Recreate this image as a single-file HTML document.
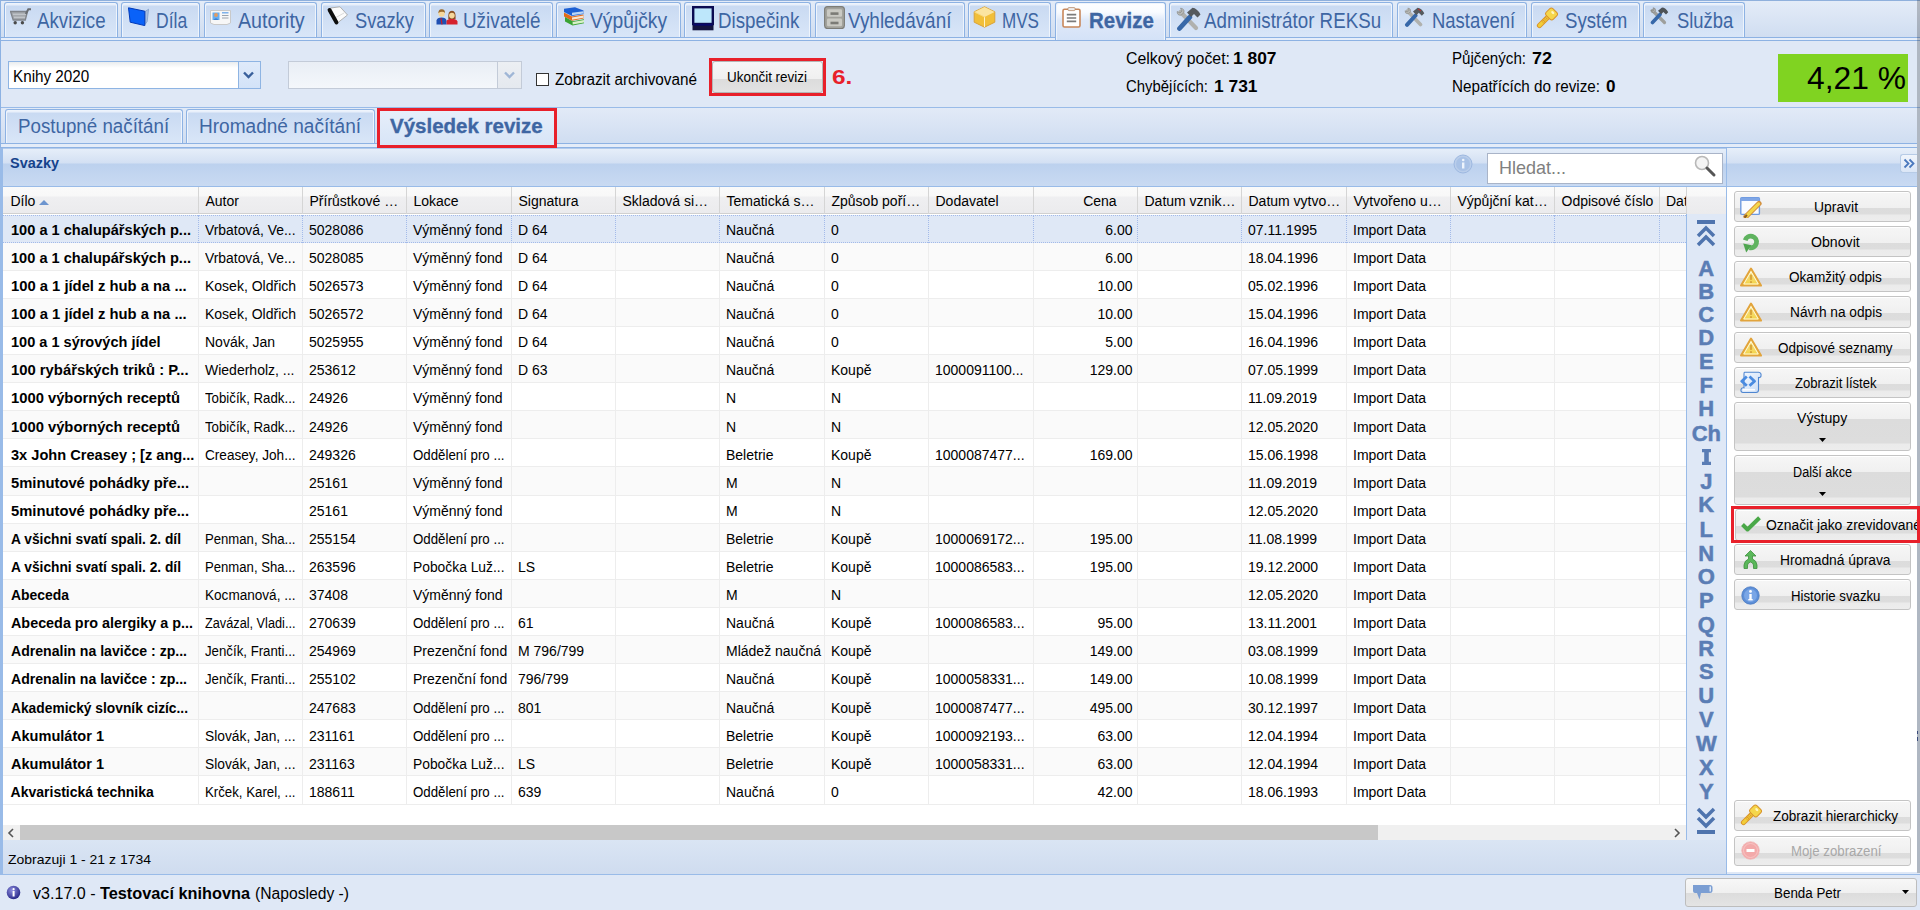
<!DOCTYPE html>
<html><head><meta charset="utf-8"><style>
html,body{margin:0;padding:0;}
body{width:1920px;height:910px;overflow:hidden;position:relative;background:#dfe8f6;font-family:"Liberation Sans",sans-serif;}
.t{position:absolute;white-space:nowrap;line-height:1;}
.ic{position:absolute;width:22px;height:20px;}

</style></head><body>
<div style="position:absolute;left:0px;top:0px;width:1920px;height:41px;background:linear-gradient(#e4ecf8,#cedcf0);"></div>
<div style="position:absolute;left:0px;top:0px;width:1920px;height:1px;background:#8fb0dc;"></div>
<div style="position:absolute;left:0px;top:37px;width:1920px;height:1px;background:#8db2e3;"></div>
<div style="position:absolute;left:0px;top:38px;width:1920px;height:2px;background:#e6eefa;"></div>
<div style="position:absolute;left:0px;top:40px;width:1920px;height:1px;background:#8db2e3;"></div>
<div style="position:absolute;left:4px;top:2px;width:114px;height:35px;box-sizing:border-box;border:1px solid #8db2e3;border-bottom:none;border-radius:3px 3px 0 0;background:linear-gradient(#e9f0fb 0,#e9f0fb 2px,#c9daf2 3px,#d9e6f8 100%);box-shadow:inset 1px 1px 0 #eef4fc,inset -1px 0 0 #eef4fc;"></div>
<div class="t" style="left:37.00px;top:10px;font-size:22px;color:#3e66a3; transform:scaleX(0.8502);transform-origin:0 0;">Akvizice</div>
<svg style="position:absolute;left:10px;top:8px" width="22" height="17" viewBox="0 0 22 17"><path d="M0.5 3.5 H17.5 L15.3 12 H3.2 Z" fill="#a4a8ad" stroke="#80848a" stroke-width="1.3"/><path d="M3 6.3 H16 M4 9.2 H15" stroke="#c9cdd2" stroke-width="1.1"/><path d="M15.8 6 L18.3 1.3 H21" stroke="#696d72" stroke-width="2" fill="none"/><circle cx="5.2" cy="14.8" r="1.7" fill="#4a4a4a"/><circle cx="12.4" cy="14.8" r="1.7" fill="#4a4a4a"/></svg>
<div style="position:absolute;left:121px;top:2px;width:79px;height:35px;box-sizing:border-box;border:1px solid #8db2e3;border-bottom:none;border-radius:3px 3px 0 0;background:linear-gradient(#e9f0fb 0,#e9f0fb 2px,#c9daf2 3px,#d9e6f8 100%);box-shadow:inset 1px 1px 0 #eef4fc,inset -1px 0 0 #eef4fc;"></div>
<div class="t" style="left:155.80px;top:10px;font-size:22px;color:#3e66a3; transform:scaleX(0.7975);transform-origin:0 0;">Díla</div>
<svg style="position:absolute;left:128px;top:7px" width="21" height="19"><path d="M17 4.5 L20.6 2.2 L19.2 14.5 L17 17.5Z" fill="#a9bfe0" stroke="#6f8fc0" stroke-width="0.6"/><path d="M0.5 0.8 L16.8 4.2 L16.8 18.6 L2.2 15.2 Z" fill="#0a62f8" stroke="#0039b8" stroke-width="1"/></svg>
<div style="position:absolute;left:204px;top:2px;width:113px;height:35px;box-sizing:border-box;border:1px solid #8db2e3;border-bottom:none;border-radius:3px 3px 0 0;background:linear-gradient(#e9f0fb 0,#e9f0fb 2px,#c9daf2 3px,#d9e6f8 100%);box-shadow:inset 1px 1px 0 #eef4fc,inset -1px 0 0 #eef4fc;"></div>
<div class="t" style="left:237.80px;top:10px;font-size:22px;color:#3e66a3; transform:scaleX(0.8943);transform-origin:0 0;">Autority</div>
<svg style="position:absolute;left:210px;top:10px" width="21" height="15"><path d="M0.5 0.5 H20.5 V13 L17 14.5 L4 14.5 L0.5 13Z" fill="#f7f7f7" stroke="#c9c9c9"/><rect x="2.5" y="2.5" width="7" height="7.5" fill="#67aef0"/><circle cx="6" cy="5" r="1.9" fill="#e59b5e"/><path d="M3.5 10 Q6 6.5 8.5 10Z" fill="#3d7fd0"/><path d="M12 2.8 H18.5" stroke="#6aa6e8" stroke-width="1.3"/><path d="M12 5.5 H18.5 M12 8 H18.5" stroke="#9ba3ad" stroke-width="1.2"/></svg>
<div style="position:absolute;left:321px;top:2px;width:105px;height:35px;box-sizing:border-box;border:1px solid #8db2e3;border-bottom:none;border-radius:3px 3px 0 0;background:linear-gradient(#e9f0fb 0,#e9f0fb 2px,#c9daf2 3px,#d9e6f8 100%);box-shadow:inset 1px 1px 0 #eef4fc,inset -1px 0 0 #eef4fc;"></div>
<div class="t" style="left:354.50px;top:10px;font-size:22px;color:#3e66a3; transform:scaleX(0.8306);transform-origin:0 0;">Svazky</div>
<svg style="position:absolute;left:326px;top:6px" width="23" height="20"><path d="M4.5 2 L14 0.8 L21.5 9 L12 16.5Z" fill="#fbfbfb" stroke="#a8a8a8" stroke-width="0.9"/><path d="M5.5 14 L18 7" stroke="#ccc" stroke-width="0.7"/><path d="M3.5 4 L10.5 16.5" stroke="#0d0d0d" stroke-width="3.8" stroke-linecap="round"/></svg>
<div style="position:absolute;left:429px;top:2px;width:124px;height:35px;box-sizing:border-box;border:1px solid #8db2e3;border-bottom:none;border-radius:3px 3px 0 0;background:linear-gradient(#e9f0fb 0,#e9f0fb 2px,#c9daf2 3px,#d9e6f8 100%);box-shadow:inset 1px 1px 0 #eef4fc,inset -1px 0 0 #eef4fc;"></div>
<div class="t" style="left:463.30px;top:10px;font-size:22px;color:#3e66a3; transform:scaleX(0.8566);transform-origin:0 0;">Uživatelé</div>
<svg style="position:absolute;left:436px;top:8px" width="22" height="17"><path d="M0.5 16.5 V12.5 Q1 9.6 5.5 9.6 Q10 9.6 10.5 12.5 V16.5Z" fill="#1f4fb3"/><path d="M5 10 L6 16.5" stroke="#c02030" stroke-width="1.2"/><circle cx="5.6" cy="5.6" r="3.2" fill="#f6d79b"/><path d="M2.3 5.2 Q2.5 0.8 6 1.3 Q9 1.3 9 5 Q7.5 3 4 4Z" fill="#9c6b2c"/><path d="M10.5 16.5 V13.5 Q11 10.8 15.8 10.8 Q20.5 10.8 21.5 13.5 V16.5Z" fill="#d6222e"/><path d="M12.3 11 Q11.5 2.8 16 2.8 Q20.2 2.8 19.6 11Z" fill="#8a4f22"/><circle cx="15.9" cy="7.6" r="2.8" fill="#f6d79b"/></svg>
<div style="position:absolute;left:556px;top:2px;width:125px;height:35px;box-sizing:border-box;border:1px solid #8db2e3;border-bottom:none;border-radius:3px 3px 0 0;background:linear-gradient(#e9f0fb 0,#e9f0fb 2px,#c9daf2 3px,#d9e6f8 100%);box-shadow:inset 1px 1px 0 #eef4fc,inset -1px 0 0 #eef4fc;"></div>
<div class="t" style="left:590.40px;top:10px;font-size:22px;color:#3e66a3; transform:scaleX(0.8758);transform-origin:0 0;">Výpůjčky</div>
<svg style="position:absolute;left:563px;top:7px" width="22" height="20"><path d="M1 5.5 L9 9.5 L20.5 7.5 L20.5 11.5 L9 13.8 L1 9.6Z" fill="#e36b18"/><path d="M9 10.4 L20.5 8.4 V10.8 L9 12.8Z" fill="#f7e5d0"/><path d="M2 10 L9.6 14.2 L21 12.2 L21 16.2 L9.6 18.6 L2 14.4Z" fill="#3aa333"/><path d="M9.6 15 L21 13 V15.5 L9.6 17.6Z" fill="#d9f0c9"/><path d="M1 1.8 L12 0.2 L20.5 3.6 L20.5 7 L9 9 L1 5Z" fill="#1c5fd3"/><path d="M9 5.8 L20.5 4.2 V6.5 L9 8.3Z" fill="#b9d6f6"/></svg>
<div style="position:absolute;left:684px;top:2px;width:127px;height:35px;box-sizing:border-box;border:1px solid #8db2e3;border-bottom:none;border-radius:3px 3px 0 0;background:linear-gradient(#e9f0fb 0,#e9f0fb 2px,#c9daf2 3px,#d9e6f8 100%);box-shadow:inset 1px 1px 0 #eef4fc,inset -1px 0 0 #eef4fc;"></div>
<div class="t" style="left:717.50px;top:10px;font-size:22px;color:#3e66a3; transform:scaleX(0.8520);transform-origin:0 0;">Dispečink</div>
<svg style="position:absolute;left:692px;top:6px" width="22" height="25"><rect x="1.2" y="1.2" width="19.6" height="16.8" fill="#bde7fb" stroke="#0b0b52" stroke-width="2.4"/><rect x="0.5" y="18.5" width="21" height="5.8" fill="#14143f"/><rect x="1.5" y="18" width="19" height="1.6" fill="#08086b"/></svg>
<div style="position:absolute;left:815px;top:2px;width:150px;height:35px;box-sizing:border-box;border:1px solid #8db2e3;border-bottom:none;border-radius:3px 3px 0 0;background:linear-gradient(#e9f0fb 0,#e9f0fb 2px,#c9daf2 3px,#d9e6f8 100%);box-shadow:inset 1px 1px 0 #eef4fc,inset -1px 0 0 #eef4fc;"></div>
<div class="t" style="left:848.30px;top:10px;font-size:22px;color:#3e66a3; transform:scaleX(0.8598);transform-origin:0 0;">Vyhledávání</div>
<svg style="position:absolute;left:824px;top:6px" width="21" height="23"><rect x="0.6" y="0.6" width="19.8" height="22" rx="3" fill="#a2a29c" stroke="#7c7c77" stroke-width="1.1"/><rect x="3" y="3.2" width="15" height="7.6" rx="1.2" fill="#c9c9c3"/><rect x="3" y="12.6" width="15" height="7.6" rx="1.2" fill="#c9c9c3"/><rect x="6.5" y="6.3" width="8" height="2.6" fill="#7b7b76"/><rect x="6.5" y="15.7" width="8" height="2.6" fill="#7b7b76"/></svg>
<div style="position:absolute;left:968px;top:2px;width:83px;height:35px;box-sizing:border-box;border:1px solid #8db2e3;border-bottom:none;border-radius:3px 3px 0 0;background:linear-gradient(#e9f0fb 0,#e9f0fb 2px,#c9daf2 3px,#d9e6f8 100%);box-shadow:inset 1px 1px 0 #eef4fc,inset -1px 0 0 #eef4fc;"></div>
<div class="t" style="left:1002.00px;top:10px;font-size:22px;color:#3e66a3; transform:scaleX(0.7761);transform-origin:0 0;">MVS</div>
<svg style="position:absolute;left:973px;top:6px" width="23" height="22"><path d="M11.5 0.8 L21.8 5.8 V16.2 L11.5 21.2 L1.2 16.2 V5.8Z" fill="#f1bf3a" stroke="#d9a23a" stroke-width="1"/><path d="M11.5 1 L21.6 5.9 L11.5 11 L1.4 5.9Z" fill="#fbe4a0"/><path d="M11.5 11 V21" stroke="#fff2c8" stroke-width="1"/><path d="M1.4 6 L11.5 11" stroke="#f9d87a"/></svg>
<div style="position:absolute;left:1055px;top:2px;width:111px;height:38px;box-sizing:border-box;border:1px solid #8db2e3;border-bottom:none;border-radius:3px 3px 0 0;background:linear-gradient(#fdfeff 0,#f8fbff 9px,#dfe9f9 17px,#d4e2f7 100%);box-shadow:inset 1px 1px 0 #eef4fc,inset -1px 0 0 #eef4fc;"></div>
<div class="t" style="left:1089.00px;top:10px;font-size:22px;font-weight:bold;color:#3e66a3; transform:scaleX(0.9290);transform-origin:0 0;-webkit-text-stroke:0.35px #3e66a3;">Revize</div>
<svg style="position:absolute;left:1062px;top:7px" width="19" height="21"><rect x="1" y="2.2" width="17" height="17.8" rx="1.5" fill="#fff" stroke="#c8875a" stroke-width="1.6"/><rect x="6" y="0.6" width="7" height="3" rx="0.8" fill="#eee" stroke="#b58a6a" stroke-width="0.8"/><path d="M4.8 7.6 H14.2 M4.8 11 H14.2 M4.8 14.4 H14.2" stroke="#7b7b7b" stroke-width="1.6"/></svg>
<div style="position:absolute;left:1169px;top:2px;width:224px;height:35px;box-sizing:border-box;border:1px solid #8db2e3;border-bottom:none;border-radius:3px 3px 0 0;background:linear-gradient(#e9f0fb 0,#e9f0fb 2px,#c9daf2 3px,#d9e6f8 100%);box-shadow:inset 1px 1px 0 #eef4fc,inset -1px 0 0 #eef4fc;"></div>
<div class="t" style="left:1203.75px;top:10px;font-size:22px;color:#3e66a3; transform:scaleX(0.8518);transform-origin:0 0;">Administrátor REKSu</div>
<svg style="position:absolute;left:1176px;top:7px" width="26" height="24"><path d="M4.5 5 L20 21" stroke="#b0b1ae" stroke-width="4.2" stroke-linecap="round"/><path d="M1.2 4.5 Q1 8.5 5 8.2 L8 5.5 Q8.5 1.5 4.5 1.2 L6 4 L4 6Z" fill="#b8b9b6" stroke="#8a8b88" stroke-width="0.7"/><path d="M3.5 21.5 L13.8 10.2" stroke="#3768a9" stroke-width="4.8" stroke-linecap="round"/><path d="M11 5.5 L16.5 0.8 Q21 1.2 24.5 7.5 L21.5 10.5 L18 7 L15 10Z" fill="#555a5e"/></svg>
<div style="position:absolute;left:1397px;top:2px;width:130px;height:35px;box-sizing:border-box;border:1px solid #8db2e3;border-bottom:none;border-radius:3px 3px 0 0;background:linear-gradient(#e9f0fb 0,#e9f0fb 2px,#c9daf2 3px,#d9e6f8 100%);box-shadow:inset 1px 1px 0 #eef4fc,inset -1px 0 0 #eef4fc;"></div>
<div class="t" style="left:1432.00px;top:10px;font-size:22px;color:#3e66a3; transform:scaleX(0.8380);transform-origin:0 0;">Nastavení</div>
<svg style="position:absolute;left:1404px;top:7px" width="21" height="20"><path d="M3.5 4 L16.5 17.5" stroke="#b0b1ae" stroke-width="3.6" stroke-linecap="round"/><path d="M1 3.8 Q1 7 4.2 6.8 L6.6 4.6 Q7 1.2 3.8 1 L5 3.3 L3.3 5Z" fill="#b8b9b6" stroke="#8a8b88" stroke-width="0.6"/><path d="M3 17.8 L11.5 8.5" stroke="#3768a9" stroke-width="4" stroke-linecap="round"/><path d="M9 4.5 L13.6 0.7 Q17.5 1 20.3 6.2 L17.8 8.7 L14.8 5.8 L12.3 8.3Z" fill="#555a5e"/><path d="M14 2 L17 4" stroke="#c03030" stroke-width="1"/></svg>
<div style="position:absolute;left:1531px;top:2px;width:109px;height:35px;box-sizing:border-box;border:1px solid #8db2e3;border-bottom:none;border-radius:3px 3px 0 0;background:linear-gradient(#e9f0fb 0,#e9f0fb 2px,#c9daf2 3px,#d9e6f8 100%);box-shadow:inset 1px 1px 0 #eef4fc,inset -1px 0 0 #eef4fc;"></div>
<div class="t" style="left:1564.80px;top:10px;font-size:22px;color:#3e66a3; transform:scaleX(0.8480);transform-origin:0 0;">Systém</div>
<svg style="position:absolute;left:1536px;top:7px" width="23" height="22"><path d="M3.5 18.5 L12.5 9.5" stroke="#d8932a" stroke-width="5.2" stroke-linecap="round"/><path d="M3.5 18.5 L12.5 9.5" stroke="#f2cd38" stroke-width="3.2" stroke-linecap="round"/><path d="M6.2 13.2 L8.8 15.8 M8.8 10.8 L10.9 12.9" stroke="#d8932a" stroke-width="2.6"/><path d="M6.4 13.6 L8.4 15.6 M9 11.2 L10.6 12.8" stroke="#f2cd38" stroke-width="1.2"/><rect x="10.5" y="2.2" width="10" height="9.5" rx="2.5" transform="rotate(45 15.5 7)" fill="#f5d64a" stroke="#d8932a" stroke-width="1"/><ellipse cx="16.8" cy="5.6" rx="1.8" ry="1.2" transform="rotate(45 16.8 5.6)" fill="#fff6c0"/></svg>
<div style="position:absolute;left:1643px;top:2px;width:102px;height:35px;box-sizing:border-box;border:1px solid #8db2e3;border-bottom:none;border-radius:3px 3px 0 0;background:linear-gradient(#e9f0fb 0,#e9f0fb 2px,#c9daf2 3px,#d9e6f8 100%);box-shadow:inset 1px 1px 0 #eef4fc,inset -1px 0 0 #eef4fc;"></div>
<div class="t" style="left:1676.70px;top:10px;font-size:22px;color:#3e66a3; transform:scaleX(0.8370);transform-origin:0 0;">Služba</div>
<svg style="position:absolute;left:1650px;top:7px" width="19" height="18"><path d="M2.5 3.5 L14.5 15.5" stroke="#9e9f9c" stroke-width="3.2" stroke-linecap="round"/><path d="M0.8 3 Q0.8 6 3.6 5.8 L5.6 3.8 Q5.8 0.8 3 0.8 L4 2.8 L2.6 4.2Z" fill="#b0b1ae" stroke="#808180" stroke-width="0.6"/><path d="M2.5 15.5 L10 7.5" stroke="#3768a9" stroke-width="3.6" stroke-linecap="round"/><path d="M8 3.8 L12 0.6 Q15.8 0.8 18.2 5.3 L16 7.5 L13.4 5 L11.2 7.2Z" fill="#4e5357"/></svg>
<div style="position:absolute;left:0px;top:41px;width:1920px;height:66px;background:#dfe8f6;"></div>
<div style="position:absolute;left:0px;top:107px;width:1920px;height:1px;background:#99bbe8;"></div>
<div style="position:absolute;left:8px;top:61px;width:253px;height:28px;box-sizing:border-box;border:1px solid #8eb4e3;background:linear-gradient(#e9ecee,#fff 6px,#fff);"></div>
<div style="position:absolute;left:238px;top:61px;width:23px;height:28px;box-sizing:border-box;border:1px solid #8eb4e3;background:linear-gradient(#dfeafa,#d3e3f8);"></div>
<svg style="position:absolute;left:243px;top:71px" width="11" height="8"><path d="M1 1.5 L5.5 6 L10 1.5" stroke="#385f9b" stroke-width="2.4" fill="none"/></svg>
<div class="t" style="left:12.80px;top:69px;font-size:16px;color:#000; transform:scaleX(0.9518);transform-origin:0 0;">Knihy 2020</div>
<div style="position:absolute;left:288px;top:61px;width:234px;height:28px;box-sizing:border-box;border:1px solid #c3cbd8;background:linear-gradient(#e9eef5,#f4f7fb);"></div>
<div style="position:absolute;left:497px;top:61px;width:25px;height:28px;box-sizing:border-box;border:1px solid #c3cbd8;background:linear-gradient(#eceff3,#e5e9ef);"></div>
<svg style="position:absolute;left:504px;top:71px" width="11" height="8"><path d="M1 1.5 L5.5 6 L10 1.5" stroke="#9fb6d6" stroke-width="2.4" fill="none"/></svg>
<div style="position:absolute;left:536px;top:73px;width:13px;height:13px;box-sizing:border-box;border:1px solid #333;background:#fff;"></div>
<div class="t" style="left:554.50px;top:72px;font-size:16px;color:#000; transform:scaleX(0.9562);transform-origin:0 0;">Zobrazit archivované</div>
<div style="position:absolute;left:709px;top:58px;width:117px;height:38px;box-sizing:border-box;border:3px solid #e8202a;"></div>
<div style="position:absolute;left:712px;top:61px;width:111px;height:32px;box-sizing:border-box;border:1px solid #b5b5b5;border-radius:3px;background:linear-gradient(#f6f6f6 0,#f0f0f0 55%,#dcdcdc 56%,#e2e2e2 100%);"></div>
<div class="t" style="left:727.00px;top:70px;font-size:14px;color:#000; transform:scaleX(0.9611);transform-origin:0 0;">Ukončit revizi</div>
<div class="t" style="left:831.70px;top:67px;font-size:20px;font-weight:bold;color:#e8202a; transform:scaleX(1.2172);transform-origin:0 0;">6.</div>
<div class="t" style="left:1125.80px;top:51px;font-size:16px;color:#000; transform:scaleX(0.9911);transform-origin:0 0;">Celkový počet:</div>
<div class="t" style="left:1232.50px;top:50px;font-size:17px;font-weight:bold;color:#000; transform:scaleX(1.0226);transform-origin:0 0;">1 807</div>
<div class="t" style="left:1125.80px;top:79px;font-size:16px;color:#000; transform:scaleX(0.9314);transform-origin:0 0;">Chybějících:</div>
<div class="t" style="left:1214.00px;top:78px;font-size:17px;font-weight:bold;color:#000; transform:scaleX(1.0226);transform-origin:0 0;">1 731</div>
<div class="t" style="left:1452.00px;top:51px;font-size:16px;color:#000; transform:scaleX(0.9455);transform-origin:0 0;">Půjčených:</div>
<div class="t" style="left:1532.00px;top:50px;font-size:17px;font-weight:bold;color:#000; transform:scaleX(1.0578);transform-origin:0 0;">72</div>
<div class="t" style="left:1452.00px;top:79px;font-size:16px;color:#000; transform:scaleX(0.9511);transform-origin:0 0;">Nepatřících do revize:</div>
<div class="t" style="left:1606.00px;top:78px;font-size:17px;font-weight:bold;color:#000; transform:scaleX(1.0049);transform-origin:0 0;">0</div>
<div style="position:absolute;left:1778px;top:54px;width:130px;height:48px;background:#80d321;"></div>
<div class="t" style="left:1807.00px;top:63px;font-size:31px;color:#000; transform:scaleX(1.0258);transform-origin:0 0;">4,21 %</div>
<div style="position:absolute;left:0px;top:0px;width:1px;height:147px;background:#8db2e3;"></div>
<div style="position:absolute;left:0px;top:108px;width:1917px;height:40px;background:linear-gradient(#e2eaf7,#cfddf1 90%);"></div>
<div style="position:absolute;left:0px;top:143px;width:1917px;height:1px;background:#8db2e3;"></div>
<div style="position:absolute;left:0px;top:144px;width:1917px;height:3px;background:#e4ecf8;"></div>
<div style="position:absolute;left:0px;top:147px;width:1917px;height:1px;background:#8db2e3;"></div>
<div style="position:absolute;left:5px;top:109px;width:178px;height:34px;box-sizing:border-box;border:1px solid #8db2e3;border-bottom:none;border-radius:3px 3px 0 0;background:linear-gradient(#e9f0fb 0,#e9f0fb 2px,#c9daf2 3px,#d9e6f8 100%);box-shadow:inset 1px 1px 0 #eef4fc,inset -1px 0 0 #eef4fc;"></div>
<div class="t" style="left:18.40px;top:116px;font-size:20px;color:#3e66a3; transform:scaleX(0.9372);transform-origin:0 0;">Postupné načítání</div>
<div style="position:absolute;left:186px;top:109px;width:189px;height:34px;box-sizing:border-box;border:1px solid #8db2e3;border-bottom:none;border-radius:3px 3px 0 0;background:linear-gradient(#e9f0fb 0,#e9f0fb 2px,#c9daf2 3px,#d9e6f8 100%);box-shadow:inset 1px 1px 0 #eef4fc,inset -1px 0 0 #eef4fc;"></div>
<div class="t" style="left:199.20px;top:116px;font-size:20px;color:#3e66a3; transform:scaleX(0.9528);transform-origin:0 0;">Hromadné načítání</div>
<div style="position:absolute;left:377px;top:108px;width:180px;height:40px;box-sizing:border-box;background:linear-gradient(#f3f7fd 0,#e6eefa 4px,#d6e4f7 100%);"></div>
<div class="t" style="left:390.40px;top:116px;font-size:20px;font-weight:bold;color:#3e66a3; transform:scaleX(1.0243);transform-origin:0 0;-webkit-text-stroke:0.35px #3e66a3;">Výsledek revize</div>
<div style="position:absolute;left:377px;top:108px;width:180px;height:40px;box-sizing:border-box;border:3px solid #e8202a;"></div>
<div style="position:absolute;left:0px;top:0px;width:1px;height:148px;background:#8db2e3;"></div>
<div style="position:absolute;left:0px;top:148px;width:3px;height:726px;background:#99bbe8;"></div>
<div style="position:absolute;left:3px;top:148px;width:1724px;height:38px;background:linear-gradient(#e7eff9 0,#e3ecf8 3px,#d3e0f3 15px,#bcd1ee 16px,#c9daf2 100%);"></div>
<div style="position:absolute;left:3px;top:148px;width:1914px;height:1px;background:#b3cbec;"></div>
<div style="position:absolute;left:3px;top:186px;width:1724px;height:1px;background:#99bbe8;"></div>
<div class="t" style="left:10.30px;top:156px;font-size:14px;font-weight:bold;color:#15428b; transform:scaleX(1.0320);transform-origin:0 0;">Svazky</div>
<svg style="position:absolute;left:1453px;top:154px" width="20" height="20"><circle cx="10" cy="10" r="9" fill="#b9cdea" stroke="#9db8e0"/><circle cx="10" cy="10" r="7" fill="#a9c2e6"/><rect x="9" y="8.5" width="2.4" height="6" fill="#eef4fc"/><circle cx="10.2" cy="6" r="1.3" fill="#eef4fc"/></svg>
<div style="position:absolute;left:1487px;top:153px;width:236px;height:31px;box-sizing:border-box;border:1px solid #a9b4c8;background:#fff;"></div>
<div class="t" style="left:1498.75px;top:158px;font-size:19px;color:#808080; transform:scaleX(0.9469);transform-origin:0 0;">Hledat...</div>
<svg style="position:absolute;left:1693px;top:154px" width="26" height="24"><circle cx="9" cy="9" r="6.5" fill="#f4f4f4" stroke="#b8b8b8" stroke-width="1.6"/><path d="M14 14 L21 21" stroke="#555" stroke-width="3" stroke-linecap="round"/></svg>
<div style="position:absolute;left:3px;top:187px;width:1724px;height:27px;background:linear-gradient(#fafafa 0,#f8f8f8 9px,#efeff1 10px,#ebebed 100%);"></div>
<div style="position:absolute;left:3px;top:213px;width:1683px;height:1px;background:#d0d0d0;"></div>
<div style="position:absolute;left:198px;top:187px;width:1px;height:27px;background:#d5d5d5;"></div>
<div style="position:absolute;left:302px;top:187px;width:1px;height:27px;background:#d5d5d5;"></div>
<div style="position:absolute;left:406px;top:187px;width:1px;height:27px;background:#d5d5d5;"></div>
<div style="position:absolute;left:511px;top:187px;width:1px;height:27px;background:#d5d5d5;"></div>
<div style="position:absolute;left:615px;top:187px;width:1px;height:27px;background:#d5d5d5;"></div>
<div style="position:absolute;left:719px;top:187px;width:1px;height:27px;background:#d5d5d5;"></div>
<div style="position:absolute;left:824px;top:187px;width:1px;height:27px;background:#d5d5d5;"></div>
<div style="position:absolute;left:928px;top:187px;width:1px;height:27px;background:#d5d5d5;"></div>
<div style="position:absolute;left:1033px;top:187px;width:1px;height:27px;background:#d5d5d5;"></div>
<div style="position:absolute;left:1137px;top:187px;width:1px;height:27px;background:#d5d5d5;"></div>
<div style="position:absolute;left:1241px;top:187px;width:1px;height:27px;background:#d5d5d5;"></div>
<div style="position:absolute;left:1346px;top:187px;width:1px;height:27px;background:#d5d5d5;"></div>
<div style="position:absolute;left:1450px;top:187px;width:1px;height:27px;background:#d5d5d5;"></div>
<div style="position:absolute;left:1554px;top:187px;width:1px;height:27px;background:#d5d5d5;"></div>
<div style="position:absolute;left:1659px;top:187px;width:1px;height:27px;background:#d5d5d5;"></div>
<div style="position:absolute;left:1686px;top:187px;width:1px;height:27px;background:#d5d5d5;"></div>
<div class="t" style="left:10.50px;top:194px;font-size:14px;color:#000;">Dílo</div>
<div class="t" style="left:205.50px;top:194px;font-size:14px;color:#000;">Autor</div>
<div class="t" style="left:309.50px;top:194px;font-size:14px;color:#000;">Přírůstkové …</div>
<div class="t" style="left:413.50px;top:194px;font-size:14px;color:#000;">Lokace</div>
<div class="t" style="left:518.50px;top:194px;font-size:14px;color:#000;">Signatura</div>
<div class="t" style="left:622.50px;top:194px;font-size:14px;color:#000;">Skladová si…</div>
<div class="t" style="left:726.50px;top:194px;font-size:14px;color:#000;">Tematická s…</div>
<div class="t" style="left:831.50px;top:194px;font-size:14px;color:#000;">Způsob poří…</div>
<div class="t" style="left:935.50px;top:194px;font-size:14px;color:#000;">Dodavatel</div>
<div class="t" style="left:1083.13px;top:194px;font-size:14px;color:#000;">Cena</div>
<div class="t" style="left:1144.50px;top:194px;font-size:14px;color:#000;">Datum vznik…</div>
<div class="t" style="left:1248.50px;top:194px;font-size:14px;color:#000;">Datum vytvo…</div>
<div class="t" style="left:1353.50px;top:194px;font-size:14px;color:#000;">Vytvořeno u…</div>
<div class="t" style="left:1457.50px;top:194px;font-size:14px;color:#000;">Výpůjční kat…</div>
<div class="t" style="left:1561.50px;top:194px;font-size:14px;color:#000;">Odpisové číslo</div>
<div style="position:absolute;left:1659px;top:187px;width:27px;height:27px;overflow:hidden">
<div class="t" style="left:7.00px;top:7px;font-size:14px;color:#000;">Dat</div>
</div>
<svg style="position:absolute;left:39px;top:199px" width="10" height="7"><path d="M0 6 L5 1 L10 6Z" fill="#6d95cf"/></svg>
<div style="position:absolute;left:3px;top:214px;width:1683px;height:611px;background:#fff;"></div>
<div style="position:absolute;left:3px;top:215px;width:1683px;height:28px;background:#dfe8f6;"></div>
<div style="position:absolute;left:3px;top:215px;width:1683px;height:1px;border-top:1px dotted #a3bae9;"></div>
<div style="position:absolute;left:3px;top:242px;width:1683px;height:1px;border-top:1px dotted #a3bae9;"></div>
<div class="t" style="left:10.60px;top:223px;font-size:14px;font-weight:bold;color:#000; transform:scaleX(1.0420);transform-origin:0 0;">100 a 1 chalupářských p...</div>
<div class="t" style="left:205.00px;top:223px;font-size:14px;color:#000; transform:scaleX(0.9911);transform-origin:0 0;">Vrbatová, Ve...</div>
<div class="t" style="left:309.00px;top:223px;font-size:14px;color:#000;">5028086</div>
<div class="t" style="left:413.00px;top:223px;font-size:14px;color:#000;">Výměnný fond</div>
<div class="t" style="left:518.00px;top:223px;font-size:14px;color:#000;">D 64</div>
<div class="t" style="left:726.00px;top:223px;font-size:14px;color:#000;">Naučná</div>
<div class="t" style="left:831.00px;top:223px;font-size:14px;color:#000;">0</div>
<div class="t" style="left:1105.25px;top:223px;font-size:14px;color:#000;">6.00</div>
<div class="t" style="left:1248.00px;top:223px;font-size:14px;color:#000;">07.11.1995</div>
<div class="t" style="left:1353.00px;top:223px;font-size:14px;color:#000;">Import Data</div>
<div style="position:absolute;left:3px;top:243px;width:1683px;height:28px;background:#fafafa;"></div>
<div style="position:absolute;left:3px;top:270px;width:1683px;height:1px;background:#ededed;"></div>
<div class="t" style="left:10.60px;top:251px;font-size:14px;font-weight:bold;color:#000; transform:scaleX(1.0420);transform-origin:0 0;">100 a 1 chalupářských p...</div>
<div class="t" style="left:205.00px;top:251px;font-size:14px;color:#000; transform:scaleX(0.9911);transform-origin:0 0;">Vrbatová, Ve...</div>
<div class="t" style="left:309.00px;top:251px;font-size:14px;color:#000;">5028085</div>
<div class="t" style="left:413.00px;top:251px;font-size:14px;color:#000;">Výměnný fond</div>
<div class="t" style="left:518.00px;top:251px;font-size:14px;color:#000;">D 64</div>
<div class="t" style="left:726.00px;top:251px;font-size:14px;color:#000;">Naučná</div>
<div class="t" style="left:831.00px;top:251px;font-size:14px;color:#000;">0</div>
<div class="t" style="left:1105.25px;top:251px;font-size:14px;color:#000;">6.00</div>
<div class="t" style="left:1248.00px;top:251px;font-size:14px;color:#000;">18.04.1996</div>
<div class="t" style="left:1353.00px;top:251px;font-size:14px;color:#000;">Import Data</div>
<div style="position:absolute;left:3px;top:298px;width:1683px;height:1px;background:#ededed;"></div>
<div class="t" style="left:10.60px;top:279px;font-size:14px;font-weight:bold;color:#000; transform:scaleX(1.0553);transform-origin:0 0;">100 a 1 jídel z hub a na ...</div>
<div class="t" style="left:205.00px;top:279px;font-size:14px;color:#000;">Kosek, Oldřich</div>
<div class="t" style="left:309.00px;top:279px;font-size:14px;color:#000;">5026573</div>
<div class="t" style="left:413.00px;top:279px;font-size:14px;color:#000;">Výměnný fond</div>
<div class="t" style="left:518.00px;top:279px;font-size:14px;color:#000;">D 64</div>
<div class="t" style="left:726.00px;top:279px;font-size:14px;color:#000;">Naučná</div>
<div class="t" style="left:831.00px;top:279px;font-size:14px;color:#000;">0</div>
<div class="t" style="left:1097.47px;top:279px;font-size:14px;color:#000;">10.00</div>
<div class="t" style="left:1248.00px;top:279px;font-size:14px;color:#000;">05.02.1996</div>
<div class="t" style="left:1353.00px;top:279px;font-size:14px;color:#000;">Import Data</div>
<div style="position:absolute;left:3px;top:299px;width:1683px;height:28px;background:#fafafa;"></div>
<div style="position:absolute;left:3px;top:326px;width:1683px;height:1px;background:#ededed;"></div>
<div class="t" style="left:10.60px;top:307px;font-size:14px;font-weight:bold;color:#000; transform:scaleX(1.0553);transform-origin:0 0;">100 a 1 jídel z hub a na ...</div>
<div class="t" style="left:205.00px;top:307px;font-size:14px;color:#000;">Kosek, Oldřich</div>
<div class="t" style="left:309.00px;top:307px;font-size:14px;color:#000;">5026572</div>
<div class="t" style="left:413.00px;top:307px;font-size:14px;color:#000;">Výměnný fond</div>
<div class="t" style="left:518.00px;top:307px;font-size:14px;color:#000;">D 64</div>
<div class="t" style="left:726.00px;top:307px;font-size:14px;color:#000;">Naučná</div>
<div class="t" style="left:831.00px;top:307px;font-size:14px;color:#000;">0</div>
<div class="t" style="left:1097.47px;top:307px;font-size:14px;color:#000;">10.00</div>
<div class="t" style="left:1248.00px;top:307px;font-size:14px;color:#000;">15.04.1996</div>
<div class="t" style="left:1353.00px;top:307px;font-size:14px;color:#000;">Import Data</div>
<div style="position:absolute;left:3px;top:354px;width:1683px;height:1px;background:#ededed;"></div>
<div class="t" style="left:10.60px;top:335px;font-size:14px;font-weight:bold;color:#000; transform:scaleX(1.0384);transform-origin:0 0;">100 a 1 sýrových jídel</div>
<div class="t" style="left:205.00px;top:335px;font-size:14px;color:#000;">Novák, Jan</div>
<div class="t" style="left:309.00px;top:335px;font-size:14px;color:#000;">5025955</div>
<div class="t" style="left:413.00px;top:335px;font-size:14px;color:#000;">Výměnný fond</div>
<div class="t" style="left:518.00px;top:335px;font-size:14px;color:#000;">D 64</div>
<div class="t" style="left:726.00px;top:335px;font-size:14px;color:#000;">Naučná</div>
<div class="t" style="left:831.00px;top:335px;font-size:14px;color:#000;">0</div>
<div class="t" style="left:1105.25px;top:335px;font-size:14px;color:#000;">5.00</div>
<div class="t" style="left:1248.00px;top:335px;font-size:14px;color:#000;">16.04.1996</div>
<div class="t" style="left:1353.00px;top:335px;font-size:14px;color:#000;">Import Data</div>
<div style="position:absolute;left:3px;top:355px;width:1683px;height:28px;background:#fafafa;"></div>
<div style="position:absolute;left:3px;top:382px;width:1683px;height:1px;background:#ededed;"></div>
<div class="t" style="left:10.60px;top:363px;font-size:14px;font-weight:bold;color:#000; transform:scaleX(1.0582);transform-origin:0 0;">100 rybářských triků : P...</div>
<div class="t" style="left:205.00px;top:363px;font-size:14px;color:#000;">Wiederholz, ...</div>
<div class="t" style="left:309.00px;top:363px;font-size:14px;color:#000;">253612</div>
<div class="t" style="left:413.00px;top:363px;font-size:14px;color:#000;">Výměnný fond</div>
<div class="t" style="left:518.00px;top:363px;font-size:14px;color:#000;">D 63</div>
<div class="t" style="left:726.00px;top:363px;font-size:14px;color:#000;">Naučná</div>
<div class="t" style="left:831.00px;top:363px;font-size:14px;color:#000;">Koupě</div>
<div class="t" style="left:935.00px;top:363px;font-size:14px;color:#000;">1000091100...</div>
<div class="t" style="left:1089.68px;top:363px;font-size:14px;color:#000;">129.00</div>
<div class="t" style="left:1248.00px;top:363px;font-size:14px;color:#000;">07.05.1999</div>
<div class="t" style="left:1353.00px;top:363px;font-size:14px;color:#000;">Import Data</div>
<div style="position:absolute;left:3px;top:410px;width:1683px;height:1px;background:#ededed;"></div>
<div class="t" style="left:10.60px;top:391px;font-size:14px;font-weight:bold;color:#000; transform:scaleX(1.0544);transform-origin:0 0;">1000 výborných receptů</div>
<div class="t" style="left:205.00px;top:391px;font-size:14px;color:#000; transform:scaleX(0.9457);transform-origin:0 0;">Tobičík, Radk...</div>
<div class="t" style="left:309.00px;top:391px;font-size:14px;color:#000;">24926</div>
<div class="t" style="left:413.00px;top:391px;font-size:14px;color:#000;">Výměnný fond</div>
<div class="t" style="left:726.00px;top:391px;font-size:14px;color:#000;">N</div>
<div class="t" style="left:831.00px;top:391px;font-size:14px;color:#000;">N</div>
<div class="t" style="left:1248.00px;top:391px;font-size:14px;color:#000;">11.09.2019</div>
<div class="t" style="left:1353.00px;top:391px;font-size:14px;color:#000;">Import Data</div>
<div style="position:absolute;left:3px;top:411px;width:1683px;height:28px;background:#fafafa;"></div>
<div style="position:absolute;left:3px;top:438px;width:1683px;height:1px;background:#ededed;"></div>
<div class="t" style="left:10.60px;top:420px;font-size:14px;font-weight:bold;color:#000; transform:scaleX(1.0544);transform-origin:0 0;">1000 výborných receptů</div>
<div class="t" style="left:205.00px;top:420px;font-size:14px;color:#000; transform:scaleX(0.9457);transform-origin:0 0;">Tobičík, Radk...</div>
<div class="t" style="left:309.00px;top:420px;font-size:14px;color:#000;">24926</div>
<div class="t" style="left:413.00px;top:420px;font-size:14px;color:#000;">Výměnný fond</div>
<div class="t" style="left:726.00px;top:420px;font-size:14px;color:#000;">N</div>
<div class="t" style="left:831.00px;top:420px;font-size:14px;color:#000;">N</div>
<div class="t" style="left:1248.00px;top:420px;font-size:14px;color:#000;">12.05.2020</div>
<div class="t" style="left:1353.00px;top:420px;font-size:14px;color:#000;">Import Data</div>
<div style="position:absolute;left:3px;top:466px;width:1683px;height:1px;background:#ededed;"></div>
<div class="t" style="left:10.60px;top:448px;font-size:14px;font-weight:bold;color:#000; transform:scaleX(1.0431);transform-origin:0 0;">3x John Creasey ; [z ang...</div>
<div class="t" style="left:205.00px;top:448px;font-size:14px;color:#000; transform:scaleX(0.9720);transform-origin:0 0;">Creasey, Joh...</div>
<div class="t" style="left:309.00px;top:448px;font-size:14px;color:#000;">249326</div>
<div class="t" style="left:413.00px;top:448px;font-size:14px;color:#000; transform:scaleX(0.9482);transform-origin:0 0;">Oddělení pro ...</div>
<div class="t" style="left:726.00px;top:448px;font-size:14px;color:#000;">Beletrie</div>
<div class="t" style="left:831.00px;top:448px;font-size:14px;color:#000;">Koupě</div>
<div class="t" style="left:935.00px;top:448px;font-size:14px;color:#000;">1000087477...</div>
<div class="t" style="left:1089.68px;top:448px;font-size:14px;color:#000;">169.00</div>
<div class="t" style="left:1248.00px;top:448px;font-size:14px;color:#000;">15.06.1998</div>
<div class="t" style="left:1353.00px;top:448px;font-size:14px;color:#000;">Import Data</div>
<div style="position:absolute;left:3px;top:467px;width:1683px;height:29px;background:#fafafa;"></div>
<div style="position:absolute;left:3px;top:495px;width:1683px;height:1px;background:#ededed;"></div>
<div class="t" style="left:10.60px;top:476px;font-size:14px;font-weight:bold;color:#000; transform:scaleX(1.0545);transform-origin:0 0;">5minutové pohádky pře...</div>
<div class="t" style="left:309.00px;top:476px;font-size:14px;color:#000;">25161</div>
<div class="t" style="left:413.00px;top:476px;font-size:14px;color:#000;">Výměnný fond</div>
<div class="t" style="left:726.00px;top:476px;font-size:14px;color:#000;">M</div>
<div class="t" style="left:831.00px;top:476px;font-size:14px;color:#000;">N</div>
<div class="t" style="left:1248.00px;top:476px;font-size:14px;color:#000;">11.09.2019</div>
<div class="t" style="left:1353.00px;top:476px;font-size:14px;color:#000;">Import Data</div>
<div style="position:absolute;left:3px;top:523px;width:1683px;height:1px;background:#ededed;"></div>
<div class="t" style="left:10.60px;top:504px;font-size:14px;font-weight:bold;color:#000; transform:scaleX(1.0545);transform-origin:0 0;">5minutové pohádky pře...</div>
<div class="t" style="left:309.00px;top:504px;font-size:14px;color:#000;">25161</div>
<div class="t" style="left:413.00px;top:504px;font-size:14px;color:#000;">Výměnný fond</div>
<div class="t" style="left:726.00px;top:504px;font-size:14px;color:#000;">M</div>
<div class="t" style="left:831.00px;top:504px;font-size:14px;color:#000;">N</div>
<div class="t" style="left:1248.00px;top:504px;font-size:14px;color:#000;">12.05.2020</div>
<div class="t" style="left:1353.00px;top:504px;font-size:14px;color:#000;">Import Data</div>
<div style="position:absolute;left:3px;top:524px;width:1683px;height:28px;background:#fafafa;"></div>
<div style="position:absolute;left:3px;top:551px;width:1683px;height:1px;background:#ededed;"></div>
<div class="t" style="left:10.60px;top:532px;font-size:14px;font-weight:bold;color:#000; transform:scaleX(0.9828);transform-origin:0 0;">A všichni svatí spali. 2. díl</div>
<div class="t" style="left:205.00px;top:532px;font-size:14px;color:#000; transform:scaleX(0.9379);transform-origin:0 0;">Penman, Sha...</div>
<div class="t" style="left:309.00px;top:532px;font-size:14px;color:#000;">255154</div>
<div class="t" style="left:413.00px;top:532px;font-size:14px;color:#000; transform:scaleX(0.9482);transform-origin:0 0;">Oddělení pro ...</div>
<div class="t" style="left:726.00px;top:532px;font-size:14px;color:#000;">Beletrie</div>
<div class="t" style="left:831.00px;top:532px;font-size:14px;color:#000;">Koupě</div>
<div class="t" style="left:935.00px;top:532px;font-size:14px;color:#000;">1000069172...</div>
<div class="t" style="left:1089.68px;top:532px;font-size:14px;color:#000;">195.00</div>
<div class="t" style="left:1248.00px;top:532px;font-size:14px;color:#000;">11.08.1999</div>
<div class="t" style="left:1353.00px;top:532px;font-size:14px;color:#000;">Import Data</div>
<div style="position:absolute;left:3px;top:579px;width:1683px;height:1px;background:#ededed;"></div>
<div class="t" style="left:10.60px;top:560px;font-size:14px;font-weight:bold;color:#000; transform:scaleX(0.9828);transform-origin:0 0;">A všichni svatí spali. 2. díl</div>
<div class="t" style="left:205.00px;top:560px;font-size:14px;color:#000; transform:scaleX(0.9379);transform-origin:0 0;">Penman, Sha...</div>
<div class="t" style="left:309.00px;top:560px;font-size:14px;color:#000;">263596</div>
<div class="t" style="left:413.00px;top:560px;font-size:14px;color:#000; transform:scaleX(0.9880);transform-origin:0 0;">Pobočka Luž...</div>
<div class="t" style="left:518.00px;top:560px;font-size:14px;color:#000;">LS</div>
<div class="t" style="left:726.00px;top:560px;font-size:14px;color:#000;">Beletrie</div>
<div class="t" style="left:831.00px;top:560px;font-size:14px;color:#000;">Koupě</div>
<div class="t" style="left:935.00px;top:560px;font-size:14px;color:#000;">1000086583...</div>
<div class="t" style="left:1089.68px;top:560px;font-size:14px;color:#000;">195.00</div>
<div class="t" style="left:1248.00px;top:560px;font-size:14px;color:#000;">19.12.2000</div>
<div class="t" style="left:1353.00px;top:560px;font-size:14px;color:#000;">Import Data</div>
<div style="position:absolute;left:3px;top:580px;width:1683px;height:28px;background:#fafafa;"></div>
<div style="position:absolute;left:3px;top:607px;width:1683px;height:1px;background:#ededed;"></div>
<div class="t" style="left:10.60px;top:588px;font-size:14px;font-weight:bold;color:#000; transform:scaleX(0.9939);transform-origin:0 0;">Abeceda</div>
<div class="t" style="left:205.00px;top:588px;font-size:14px;color:#000; transform:scaleX(0.9692);transform-origin:0 0;">Kocmanová, ...</div>
<div class="t" style="left:309.00px;top:588px;font-size:14px;color:#000;">37408</div>
<div class="t" style="left:413.00px;top:588px;font-size:14px;color:#000;">Výměnný fond</div>
<div class="t" style="left:726.00px;top:588px;font-size:14px;color:#000;">M</div>
<div class="t" style="left:831.00px;top:588px;font-size:14px;color:#000;">N</div>
<div class="t" style="left:1248.00px;top:588px;font-size:14px;color:#000;">12.05.2020</div>
<div class="t" style="left:1353.00px;top:588px;font-size:14px;color:#000;">Import Data</div>
<div style="position:absolute;left:3px;top:635px;width:1683px;height:1px;background:#ededed;"></div>
<div class="t" style="left:10.60px;top:616px;font-size:14px;font-weight:bold;color:#000; transform:scaleX(1.0260);transform-origin:0 0;">Abeceda pro alergiky a p...</div>
<div class="t" style="left:205.00px;top:616px;font-size:14px;color:#000; transform:scaleX(0.9087);transform-origin:0 0;">Zavázal, Vladi...</div>
<div class="t" style="left:309.00px;top:616px;font-size:14px;color:#000;">270639</div>
<div class="t" style="left:413.00px;top:616px;font-size:14px;color:#000; transform:scaleX(0.9482);transform-origin:0 0;">Oddělení pro ...</div>
<div class="t" style="left:518.00px;top:616px;font-size:14px;color:#000;">61</div>
<div class="t" style="left:726.00px;top:616px;font-size:14px;color:#000;">Naučná</div>
<div class="t" style="left:831.00px;top:616px;font-size:14px;color:#000;">Koupě</div>
<div class="t" style="left:935.00px;top:616px;font-size:14px;color:#000;">1000086583...</div>
<div class="t" style="left:1097.47px;top:616px;font-size:14px;color:#000;">95.00</div>
<div class="t" style="left:1248.00px;top:616px;font-size:14px;color:#000;">13.11.2001</div>
<div class="t" style="left:1353.00px;top:616px;font-size:14px;color:#000;">Import Data</div>
<div style="position:absolute;left:3px;top:636px;width:1683px;height:28px;background:#fafafa;"></div>
<div style="position:absolute;left:3px;top:663px;width:1683px;height:1px;background:#ededed;"></div>
<div class="t" style="left:10.60px;top:644px;font-size:14px;font-weight:bold;color:#000; transform:scaleX(1.0055);transform-origin:0 0;">Adrenalin na lavičce : zp...</div>
<div class="t" style="left:205.00px;top:644px;font-size:14px;color:#000; transform:scaleX(0.9458);transform-origin:0 0;">Jenčík, Franti...</div>
<div class="t" style="left:309.00px;top:644px;font-size:14px;color:#000;">254969</div>
<div class="t" style="left:413.00px;top:644px;font-size:14px;color:#000;">Prezenční fond</div>
<div class="t" style="left:518.00px;top:644px;font-size:14px;color:#000;">M 796/799</div>
<div class="t" style="left:726.00px;top:644px;font-size:14px;color:#000;">Mládež naučná</div>
<div class="t" style="left:831.00px;top:644px;font-size:14px;color:#000;">Koupě</div>
<div class="t" style="left:1089.68px;top:644px;font-size:14px;color:#000;">149.00</div>
<div class="t" style="left:1248.00px;top:644px;font-size:14px;color:#000;">03.08.1999</div>
<div class="t" style="left:1353.00px;top:644px;font-size:14px;color:#000;">Import Data</div>
<div style="position:absolute;left:3px;top:691px;width:1683px;height:1px;background:#ededed;"></div>
<div class="t" style="left:10.60px;top:672px;font-size:14px;font-weight:bold;color:#000; transform:scaleX(1.0055);transform-origin:0 0;">Adrenalin na lavičce : zp...</div>
<div class="t" style="left:205.00px;top:672px;font-size:14px;color:#000; transform:scaleX(0.9458);transform-origin:0 0;">Jenčík, Franti...</div>
<div class="t" style="left:309.00px;top:672px;font-size:14px;color:#000;">255102</div>
<div class="t" style="left:413.00px;top:672px;font-size:14px;color:#000;">Prezenční fond</div>
<div class="t" style="left:518.00px;top:672px;font-size:14px;color:#000;">796/799</div>
<div class="t" style="left:726.00px;top:672px;font-size:14px;color:#000;">Naučná</div>
<div class="t" style="left:831.00px;top:672px;font-size:14px;color:#000;">Koupě</div>
<div class="t" style="left:935.00px;top:672px;font-size:14px;color:#000;">1000058331...</div>
<div class="t" style="left:1089.68px;top:672px;font-size:14px;color:#000;">149.00</div>
<div class="t" style="left:1248.00px;top:672px;font-size:14px;color:#000;">10.08.1999</div>
<div class="t" style="left:1353.00px;top:672px;font-size:14px;color:#000;">Import Data</div>
<div style="position:absolute;left:3px;top:692px;width:1683px;height:28px;background:#fafafa;"></div>
<div style="position:absolute;left:3px;top:719px;width:1683px;height:1px;background:#ededed;"></div>
<div class="t" style="left:10.60px;top:701px;font-size:14px;font-weight:bold;color:#000; transform:scaleX(0.9847);transform-origin:0 0;">Akademický slovník cizíc...</div>
<div class="t" style="left:309.00px;top:701px;font-size:14px;color:#000;">247683</div>
<div class="t" style="left:413.00px;top:701px;font-size:14px;color:#000; transform:scaleX(0.9482);transform-origin:0 0;">Oddělení pro ...</div>
<div class="t" style="left:518.00px;top:701px;font-size:14px;color:#000;">801</div>
<div class="t" style="left:726.00px;top:701px;font-size:14px;color:#000;">Naučná</div>
<div class="t" style="left:831.00px;top:701px;font-size:14px;color:#000;">Koupě</div>
<div class="t" style="left:935.00px;top:701px;font-size:14px;color:#000;">1000087477...</div>
<div class="t" style="left:1089.68px;top:701px;font-size:14px;color:#000;">495.00</div>
<div class="t" style="left:1248.00px;top:701px;font-size:14px;color:#000;">30.12.1997</div>
<div class="t" style="left:1353.00px;top:701px;font-size:14px;color:#000;">Import Data</div>
<div style="position:absolute;left:3px;top:747px;width:1683px;height:1px;background:#ededed;"></div>
<div class="t" style="left:10.60px;top:729px;font-size:14px;font-weight:bold;color:#000; transform:scaleX(1.0396);transform-origin:0 0;">Akumulátor 1</div>
<div class="t" style="left:205.00px;top:729px;font-size:14px;color:#000; transform:scaleX(0.9857);transform-origin:0 0;">Slovák, Jan, ...</div>
<div class="t" style="left:309.00px;top:729px;font-size:14px;color:#000;">231161</div>
<div class="t" style="left:413.00px;top:729px;font-size:14px;color:#000; transform:scaleX(0.9482);transform-origin:0 0;">Oddělení pro ...</div>
<div class="t" style="left:726.00px;top:729px;font-size:14px;color:#000;">Beletrie</div>
<div class="t" style="left:831.00px;top:729px;font-size:14px;color:#000;">Koupě</div>
<div class="t" style="left:935.00px;top:729px;font-size:14px;color:#000;">1000092193...</div>
<div class="t" style="left:1097.47px;top:729px;font-size:14px;color:#000;">63.00</div>
<div class="t" style="left:1248.00px;top:729px;font-size:14px;color:#000;">12.04.1994</div>
<div class="t" style="left:1353.00px;top:729px;font-size:14px;color:#000;">Import Data</div>
<div style="position:absolute;left:3px;top:748px;width:1683px;height:28px;background:#fafafa;"></div>
<div style="position:absolute;left:3px;top:775px;width:1683px;height:1px;background:#ededed;"></div>
<div class="t" style="left:10.60px;top:757px;font-size:14px;font-weight:bold;color:#000; transform:scaleX(1.0396);transform-origin:0 0;">Akumulátor 1</div>
<div class="t" style="left:205.00px;top:757px;font-size:14px;color:#000; transform:scaleX(0.9857);transform-origin:0 0;">Slovák, Jan, ...</div>
<div class="t" style="left:309.00px;top:757px;font-size:14px;color:#000;">231163</div>
<div class="t" style="left:413.00px;top:757px;font-size:14px;color:#000; transform:scaleX(0.9880);transform-origin:0 0;">Pobočka Luž...</div>
<div class="t" style="left:518.00px;top:757px;font-size:14px;color:#000;">LS</div>
<div class="t" style="left:726.00px;top:757px;font-size:14px;color:#000;">Beletrie</div>
<div class="t" style="left:831.00px;top:757px;font-size:14px;color:#000;">Koupě</div>
<div class="t" style="left:935.00px;top:757px;font-size:14px;color:#000;">1000058331...</div>
<div class="t" style="left:1097.47px;top:757px;font-size:14px;color:#000;">63.00</div>
<div class="t" style="left:1248.00px;top:757px;font-size:14px;color:#000;">12.04.1994</div>
<div class="t" style="left:1353.00px;top:757px;font-size:14px;color:#000;">Import Data</div>
<div style="position:absolute;left:3px;top:804px;width:1683px;height:1px;background:#ededed;"></div>
<div class="t" style="left:10.60px;top:785px;font-size:14px;font-weight:bold;color:#000;">Akvaristická technika</div>
<div class="t" style="left:205.00px;top:785px;font-size:14px;color:#000; transform:scaleX(0.9457);transform-origin:0 0;">Krček, Karel, ...</div>
<div class="t" style="left:309.00px;top:785px;font-size:14px;color:#000;">188611</div>
<div class="t" style="left:413.00px;top:785px;font-size:14px;color:#000; transform:scaleX(0.9482);transform-origin:0 0;">Oddělení pro ...</div>
<div class="t" style="left:518.00px;top:785px;font-size:14px;color:#000;">639</div>
<div class="t" style="left:726.00px;top:785px;font-size:14px;color:#000;">Naučná</div>
<div class="t" style="left:831.00px;top:785px;font-size:14px;color:#000;">0</div>
<div class="t" style="left:1097.47px;top:785px;font-size:14px;color:#000;">42.00</div>
<div class="t" style="left:1248.00px;top:785px;font-size:14px;color:#000;">18.06.1993</div>
<div class="t" style="left:1353.00px;top:785px;font-size:14px;color:#000;">Import Data</div>
<div style="position:absolute;left:198px;top:243px;width:1px;height:561px;background:#ededed;"></div>
<div style="position:absolute;left:198px;top:215px;width:1px;height:28px;border-left:1px dotted #a3bae9;"></div>
<div style="position:absolute;left:302px;top:243px;width:1px;height:561px;background:#ededed;"></div>
<div style="position:absolute;left:302px;top:215px;width:1px;height:28px;border-left:1px dotted #a3bae9;"></div>
<div style="position:absolute;left:406px;top:243px;width:1px;height:561px;background:#ededed;"></div>
<div style="position:absolute;left:406px;top:215px;width:1px;height:28px;border-left:1px dotted #a3bae9;"></div>
<div style="position:absolute;left:511px;top:243px;width:1px;height:561px;background:#ededed;"></div>
<div style="position:absolute;left:511px;top:215px;width:1px;height:28px;border-left:1px dotted #a3bae9;"></div>
<div style="position:absolute;left:615px;top:243px;width:1px;height:561px;background:#ededed;"></div>
<div style="position:absolute;left:615px;top:215px;width:1px;height:28px;border-left:1px dotted #a3bae9;"></div>
<div style="position:absolute;left:719px;top:243px;width:1px;height:561px;background:#ededed;"></div>
<div style="position:absolute;left:719px;top:215px;width:1px;height:28px;border-left:1px dotted #a3bae9;"></div>
<div style="position:absolute;left:824px;top:243px;width:1px;height:561px;background:#ededed;"></div>
<div style="position:absolute;left:824px;top:215px;width:1px;height:28px;border-left:1px dotted #a3bae9;"></div>
<div style="position:absolute;left:928px;top:243px;width:1px;height:561px;background:#ededed;"></div>
<div style="position:absolute;left:928px;top:215px;width:1px;height:28px;border-left:1px dotted #a3bae9;"></div>
<div style="position:absolute;left:1033px;top:243px;width:1px;height:561px;background:#ededed;"></div>
<div style="position:absolute;left:1033px;top:215px;width:1px;height:28px;border-left:1px dotted #a3bae9;"></div>
<div style="position:absolute;left:1137px;top:243px;width:1px;height:561px;background:#ededed;"></div>
<div style="position:absolute;left:1137px;top:215px;width:1px;height:28px;border-left:1px dotted #a3bae9;"></div>
<div style="position:absolute;left:1241px;top:243px;width:1px;height:561px;background:#ededed;"></div>
<div style="position:absolute;left:1241px;top:215px;width:1px;height:28px;border-left:1px dotted #a3bae9;"></div>
<div style="position:absolute;left:1346px;top:243px;width:1px;height:561px;background:#ededed;"></div>
<div style="position:absolute;left:1346px;top:215px;width:1px;height:28px;border-left:1px dotted #a3bae9;"></div>
<div style="position:absolute;left:1450px;top:243px;width:1px;height:561px;background:#ededed;"></div>
<div style="position:absolute;left:1450px;top:215px;width:1px;height:28px;border-left:1px dotted #a3bae9;"></div>
<div style="position:absolute;left:1554px;top:243px;width:1px;height:561px;background:#ededed;"></div>
<div style="position:absolute;left:1554px;top:215px;width:1px;height:28px;border-left:1px dotted #a3bae9;"></div>
<div style="position:absolute;left:1659px;top:243px;width:1px;height:561px;background:#ededed;"></div>
<div style="position:absolute;left:1659px;top:215px;width:1px;height:28px;border-left:1px dotted #a3bae9;"></div>
<div style="position:absolute;left:1686px;top:214px;width:41px;height:627px;box-sizing:border-box;background:#dfe8f6;border-left:1px solid #99bbe8;border-right:1px solid #99bbe8;"></div>
<div class="t" style="left:1698.36px;top:258px;font-size:22px;font-weight:bold;color:#5a7db5;-webkit-text-stroke:0.5px #5a7db5;">A</div>
<div class="t" style="left:1698.36px;top:281px;font-size:22px;font-weight:bold;color:#5a7db5;-webkit-text-stroke:0.5px #5a7db5;">B</div>
<div class="t" style="left:1698.36px;top:304px;font-size:22px;font-weight:bold;color:#5a7db5;-webkit-text-stroke:0.5px #5a7db5;">C</div>
<div class="t" style="left:1698.36px;top:327px;font-size:22px;font-weight:bold;color:#5a7db5;-webkit-text-stroke:0.5px #5a7db5;">D</div>
<div class="t" style="left:1698.96px;top:351px;font-size:22px;font-weight:bold;color:#5a7db5;-webkit-text-stroke:0.5px #5a7db5;">E</div>
<div class="t" style="left:1699.58px;top:375px;font-size:22px;font-weight:bold;color:#5a7db5;-webkit-text-stroke:0.5px #5a7db5;">F</div>
<div class="t" style="left:1698.36px;top:398px;font-size:22px;font-weight:bold;color:#5a7db5;-webkit-text-stroke:0.5px #5a7db5;">H</div>
<div class="t" style="left:1691.64px;top:423px;font-size:22px;font-weight:bold;color:#5a7db5;-webkit-text-stroke:0.5px #5a7db5;">Ch</div>
<svg style="position:absolute;left:1702px;top:449px" width="9" height="16"><path d="M0 0H9V3.3H6.8V12.7H9V16H0V12.7H2.2V3.3H0Z" fill="#5a7db5"/></svg>
<div class="t" style="left:1700.18px;top:471px;font-size:22px;font-weight:bold;color:#5a7db5;-webkit-text-stroke:0.5px #5a7db5;">J</div>
<div class="t" style="left:1698.36px;top:494px;font-size:22px;font-weight:bold;color:#5a7db5;-webkit-text-stroke:0.5px #5a7db5;">K</div>
<div class="t" style="left:1699.58px;top:519px;font-size:22px;font-weight:bold;color:#5a7db5;-webkit-text-stroke:0.5px #5a7db5;">L</div>
<div class="t" style="left:1698.36px;top:543px;font-size:22px;font-weight:bold;color:#5a7db5;-webkit-text-stroke:0.5px #5a7db5;">N</div>
<div class="t" style="left:1697.74px;top:566px;font-size:22px;font-weight:bold;color:#5a7db5;-webkit-text-stroke:0.5px #5a7db5;">O</div>
<div class="t" style="left:1698.96px;top:590px;font-size:22px;font-weight:bold;color:#5a7db5;-webkit-text-stroke:0.5px #5a7db5;">P</div>
<div class="t" style="left:1697.74px;top:614px;font-size:22px;font-weight:bold;color:#5a7db5;-webkit-text-stroke:0.5px #5a7db5;">Q</div>
<div class="t" style="left:1698.36px;top:638px;font-size:22px;font-weight:bold;color:#5a7db5;-webkit-text-stroke:0.5px #5a7db5;">R</div>
<div class="t" style="left:1698.96px;top:661px;font-size:22px;font-weight:bold;color:#5a7db5;-webkit-text-stroke:0.5px #5a7db5;">S</div>
<div class="t" style="left:1698.36px;top:685px;font-size:22px;font-weight:bold;color:#5a7db5;-webkit-text-stroke:0.5px #5a7db5;">U</div>
<div class="t" style="left:1698.96px;top:709px;font-size:22px;font-weight:bold;color:#5a7db5;-webkit-text-stroke:0.5px #5a7db5;">V</div>
<div class="t" style="left:1695.92px;top:733px;font-size:22px;font-weight:bold;color:#5a7db5;-webkit-text-stroke:0.5px #5a7db5;">W</div>
<div class="t" style="left:1698.96px;top:757px;font-size:22px;font-weight:bold;color:#5a7db5;-webkit-text-stroke:0.5px #5a7db5;">X</div>
<div class="t" style="left:1698.96px;top:781px;font-size:22px;font-weight:bold;color:#5a7db5;-webkit-text-stroke:0.5px #5a7db5;">Y</div>
<svg style="position:absolute;left:1696px;top:219px" width="20" height="30"><rect x="1" y="1" width="18" height="4" fill="#4f74ae"/><path d="M2 17 L10 9 L18 17 M2 26 L10 18 L18 26" stroke="#4f74ae" stroke-width="3.5" fill="none"/></svg>
<svg style="position:absolute;left:1696px;top:805px" width="20" height="30"><rect x="1" y="25" width="18" height="4" fill="#4f74ae"/><path d="M2 4 L10 12 L18 4 M2 13 L10 21 L18 13" stroke="#4f74ae" stroke-width="3.5" fill="none"/></svg>
<div style="position:absolute;left:3px;top:805px;width:1683px;height:20px;background:#fff;"></div>
<div style="position:absolute;left:3px;top:825px;width:1683px;height:15px;background:#f0f0f0;"></div>
<div style="position:absolute;left:20px;top:825px;width:1358px;height:15px;background:#c8c8c8;"></div>
<svg style="position:absolute;left:7px;top:828px" width="8" height="10"><path d="M6 1 L2 5 L6 9" stroke="#555" stroke-width="1.6" fill="none"/></svg>
<svg style="position:absolute;left:1673px;top:828px" width="8" height="10"><path d="M2 1 L6 5 L2 9" stroke="#555" stroke-width="1.6" fill="none"/></svg>
<div style="position:absolute;left:3px;top:840px;width:1724px;height:34px;background:linear-gradient(#dae5f4,#cfdcef);"></div>
<div style="position:absolute;left:1686px;top:840px;width:41px;height:34px;background:linear-gradient(#dae5f4,#cfdcef);"></div>
<div style="position:absolute;left:0px;top:874px;width:1920px;height:1px;background:#99bbe8;"></div>
<div class="t" style="left:8.10px;top:853px;font-size:13px;color:#000; transform:scaleX(1.0756);transform-origin:0 0;">Zobrazuji 1 - 21 z 1734</div>
<div style="position:absolute;left:1727px;top:148px;width:190px;height:38px;background:linear-gradient(#e7eff9 0,#e3ecf8 3px,#d3e0f3 15px,#bcd1ee 16px,#c9daf2 100%);"></div>
<div style="position:absolute;left:1727px;top:186px;width:190px;height:1px;background:#99bbe8;"></div>
<div style="position:absolute;left:1726px;top:148px;width:1px;height:726px;background:#99bbe8;"></div>
<div style="position:absolute;left:1727px;top:187px;width:190px;height:685px;background:#fff;"></div>
<div style="position:absolute;left:1727px;top:872px;width:190px;height:2px;background:#dfe8f6;"></div>
<div style="position:absolute;left:1900px;top:154px;width:17px;height:19px;box-sizing:border-box;border:1px solid #b6cbe6;border-right:none;border-radius:3px 0 0 3px;background:linear-gradient(#f0f5fc,#dbe6f6);"></div>
<svg style="position:absolute;left:1903px;top:158px" width="13" height="11"><path d="M1.5 1.5 L5.5 5.5 L1.5 9.5 M6.5 1.5 L10.5 5.5 L6.5 9.5" stroke="#4a78bd" stroke-width="1.8" fill="none"/></svg>
<div style="position:absolute;left:1734px;top:191px;width:177px;height:31px;box-sizing:border-box;border:1px solid #c4c4c4;border-radius:3px;background:linear-gradient(#f6f6f6 0,#f0f0f0 16px,#dcdcdc 16px,#dddddd calc(100% - 7px),#ebebeb calc(100% - 6px),#ededed 100%);box-shadow:inset 0 1px 0 #fff;"></div>
<div class="t" style="left:1814.00px;top:200px;font-size:14px;color:#000; transform:scaleX(0.9923);transform-origin:0 0;">Upravit</div>
<svg style="position:absolute;left:1740px;top:197px" width="22" height="21"><rect x="0.8" y="0.8" width="18.6" height="16.6" rx="1" fill="#fafcff" stroke="#6e9ae0" stroke-width="1.4"/><rect x="0.8" y="0.8" width="18.6" height="3.2" fill="#7fa6e6"/><path d="M6 19.5 L19 6.5" stroke="#d28c3a" stroke-width="5.2" stroke-linecap="round"/><path d="M6.5 19 L18.6 6.9" stroke="#f3d64a" stroke-width="3.2" stroke-linecap="round"/><path d="M4.5 20.5 L7 18" stroke="#8a5a20" stroke-width="2"/></svg>
<div style="position:absolute;left:1734px;top:226px;width:177px;height:31px;box-sizing:border-box;border:1px solid #c4c4c4;border-radius:3px;background:linear-gradient(#f6f6f6 0,#f0f0f0 16px,#dcdcdc 16px,#dddddd calc(100% - 7px),#ebebeb calc(100% - 6px),#ededed 100%);box-shadow:inset 0 1px 0 #fff;"></div>
<div class="t" style="left:1811.00px;top:235px;font-size:14px;color:#000; transform:scaleX(1.0094);transform-origin:0 0;">Obnovit</div>
<svg style="position:absolute;left:1742px;top:233px" width="18" height="20"><path d="M3.2 7.2 A5.8 5.8 0 1 1 7.5 14.6" stroke="#5fb35f" stroke-width="4.8" fill="none"/><path d="M1.2 10.5 L9.5 12.2 L4.2 19.5Z" fill="#4fa54f"/><path d="M7.8 7 L11.4 9.2 L7.8 11.4Z" fill="#e8f3e8"/></svg>
<div style="position:absolute;left:1734px;top:261px;width:177px;height:31px;box-sizing:border-box;border:1px solid #c4c4c4;border-radius:3px;background:linear-gradient(#f6f6f6 0,#f0f0f0 16px,#dcdcdc 16px,#dddddd calc(100% - 7px),#ebebeb calc(100% - 6px),#ededed 100%);box-shadow:inset 0 1px 0 #fff;"></div>
<div class="t" style="left:1789.40px;top:270px;font-size:14px;color:#000; transform:scaleX(0.9698);transform-origin:0 0;">Okamžitý odpis</div>
<svg style="position:absolute;left:1740px;top:267px" width="22" height="20"><defs><linearGradient id="wg" x1="0" y1="0" x2="0" y2="1"><stop offset="0" stop-color="#fbeaa6"/><stop offset="1" stop-color="#f2d13e"/></linearGradient></defs><path d="M11 1.6 L21 18.6 H1Z" fill="url(#wg)" stroke="#e2a43c" stroke-width="2" stroke-linejoin="round"/><path d="M11 4.6 L18.2 17 H3.8Z" fill="none" stroke="#fff8d8" stroke-width="1"/><rect x="9.8" y="7.5" width="2.4" height="5.5" rx="1.1" fill="#d9a63a"/><rect x="10" y="14.2" width="2" height="1.8" fill="#d9a63a"/></svg>
<div style="position:absolute;left:1734px;top:296px;width:177px;height:32px;box-sizing:border-box;border:1px solid #c4c4c4;border-radius:3px;background:linear-gradient(#f6f6f6 0,#f0f0f0 16px,#dcdcdc 16px,#dddddd calc(100% - 7px),#ebebeb calc(100% - 6px),#ededed 100%);box-shadow:inset 0 1px 0 #fff;"></div>
<div class="t" style="left:1790.00px;top:305px;font-size:14px;color:#000; transform:scaleX(0.9771);transform-origin:0 0;">Návrh na odpis</div>
<svg style="position:absolute;left:1740px;top:302px" width="22" height="20"><defs><linearGradient id="wg" x1="0" y1="0" x2="0" y2="1"><stop offset="0" stop-color="#fbeaa6"/><stop offset="1" stop-color="#f2d13e"/></linearGradient></defs><path d="M11 1.6 L21 18.6 H1Z" fill="url(#wg)" stroke="#e2a43c" stroke-width="2" stroke-linejoin="round"/><path d="M11 4.6 L18.2 17 H3.8Z" fill="none" stroke="#fff8d8" stroke-width="1"/><rect x="9.8" y="7.5" width="2.4" height="5.5" rx="1.1" fill="#d9a63a"/><rect x="10" y="14.2" width="2" height="1.8" fill="#d9a63a"/></svg>
<div style="position:absolute;left:1734px;top:332px;width:177px;height:31px;box-sizing:border-box;border:1px solid #c4c4c4;border-radius:3px;background:linear-gradient(#f6f6f6 0,#f0f0f0 16px,#dcdcdc 16px,#dddddd calc(100% - 7px),#ebebeb calc(100% - 6px),#ededed 100%);box-shadow:inset 0 1px 0 #fff;"></div>
<div class="t" style="left:1778.00px;top:341px;font-size:14px;color:#000; transform:scaleX(0.9626);transform-origin:0 0;">Odpisové seznamy</div>
<svg style="position:absolute;left:1740px;top:337px" width="22" height="20"><defs><linearGradient id="wg" x1="0" y1="0" x2="0" y2="1"><stop offset="0" stop-color="#fbeaa6"/><stop offset="1" stop-color="#f2d13e"/></linearGradient></defs><path d="M11 1.6 L21 18.6 H1Z" fill="url(#wg)" stroke="#e2a43c" stroke-width="2" stroke-linejoin="round"/><path d="M11 4.6 L18.2 17 H3.8Z" fill="none" stroke="#fff8d8" stroke-width="1"/><rect x="9.8" y="7.5" width="2.4" height="5.5" rx="1.1" fill="#d9a63a"/><rect x="10" y="14.2" width="2" height="1.8" fill="#d9a63a"/></svg>
<div style="position:absolute;left:1734px;top:367px;width:177px;height:31px;box-sizing:border-box;border:1px solid #c4c4c4;border-radius:3px;background:linear-gradient(#f6f6f6 0,#f0f0f0 16px,#dcdcdc 16px,#dddddd calc(100% - 7px),#ebebeb calc(100% - 6px),#ededed 100%);box-shadow:inset 0 1px 0 #fff;"></div>
<div class="t" style="left:1795.40px;top:376px;font-size:14px;color:#000; transform:scaleX(0.9365);transform-origin:0 0;">Zobrazit lístek</div>
<svg style="position:absolute;left:1740px;top:371px" width="22" height="23"><defs><linearGradient id="sg" x1="0" y1="0" x2="1" y2="1"><stop offset="0" stop-color="#f4f9ff"/><stop offset="1" stop-color="#c9dcf6"/></linearGradient></defs><path d="M4.5 1.2 H18.5 Q21.5 1.5 21 5 Q20.5 7 18.5 6.5 V19 Q18.5 21.5 16 21.5 H3 Q0.6 21.3 1 18.5 Q1.5 16.5 4 16.8 V3 Q4 1.2 4.5 1.2Z" fill="url(#sg)" stroke="#4f86d0" stroke-width="1.1"/><path d="M3 18.8 H15" stroke="#fff" stroke-width="1.4"/><path d="M6.8 5.5 L1.8 10.2 L6.8 14.8 M9.5 5.5 L14.5 10.2 L9.5 14.8" stroke="#4a8be0" stroke-width="2.8" fill="none" stroke-linejoin="round"/></svg>
<div style="position:absolute;left:1734px;top:402px;width:177px;height:49px;box-sizing:border-box;border:1px solid #c4c4c4;border-radius:3px;background:linear-gradient(#f6f6f6 0,#f0f0f0 16px,#dcdcdc 16px,#dddddd calc(100% - 7px),#ebebeb calc(100% - 6px),#ededed 100%);box-shadow:inset 0 1px 0 #fff;"></div>
<div class="t" style="left:1797.00px;top:411px;font-size:14px;color:#000; transform:scaleX(1.0101);transform-origin:0 0;">Výstupy</div>
<svg style="position:absolute;left:1819px;top:438px" width="7" height="4"><path d="M0 0 L7 0 L3.5 4Z" fill="#000"/></svg>
<div style="position:absolute;left:1734px;top:455px;width:177px;height:50px;box-sizing:border-box;border:1px solid #c4c4c4;border-radius:3px;background:linear-gradient(#f6f6f6 0,#f0f0f0 16px,#dcdcdc 16px,#dddddd calc(100% - 7px),#ebebeb calc(100% - 6px),#ededed 100%);box-shadow:inset 0 1px 0 #fff;"></div>
<div class="t" style="left:1793.00px;top:465px;font-size:14px;color:#000; transform:scaleX(0.9027);transform-origin:0 0;">Další akce</div>
<svg style="position:absolute;left:1819px;top:492px" width="7" height="4"><path d="M0 0 L7 0 L3.5 4Z" fill="#000"/></svg>
<div style="position:absolute;left:1727px;top:500px;width:190px;height:50px;overflow:hidden">
</div>
<div style="position:absolute;left:1735px;top:509px;width:190px;height:32px;box-sizing:border-box;border:1px solid #c4c4c4;border-radius:3px;background:linear-gradient(#f6f6f6 0,#f0f0f0 16px,#dcdcdc 16px,#dddddd calc(100% - 7px),#ebebeb calc(100% - 6px),#ededed 100%);box-shadow:inset 0 1px 0 #fff;"></div>
<div class="t" style="left:1766.00px;top:518px;font-size:14px;color:#000; transform:scaleX(0.9910);transform-origin:0 0;">Označit jako zrevidované</div>
<svg style="position:absolute;left:1741px;top:516px" width="20" height="16"><path d="M1.5 8.5 L6.5 13.5 L18.5 1.8" stroke="#4aa848" stroke-width="4" fill="none" stroke-linejoin="round"/></svg>
<div style="position:absolute;left:1734px;top:544px;width:177px;height:31px;box-sizing:border-box;border:1px solid #c4c4c4;border-radius:3px;background:linear-gradient(#f6f6f6 0,#f0f0f0 16px,#dcdcdc 16px,#dddddd calc(100% - 7px),#ebebeb calc(100% - 6px),#ededed 100%);box-shadow:inset 0 1px 0 #fff;"></div>
<div class="t" style="left:1780.00px;top:553px;font-size:14px;color:#000; transform:scaleX(0.9861);transform-origin:0 0;">Hromadná úprava</div>
<svg style="position:absolute;left:1742px;top:550px" width="17" height="19"><path d="M8.5 0.5 L14 6 H10.5 V9 Q14.5 10.5 15 15 V18.5 H11.5 V15 Q11 12.5 8.5 12 Q6 12.5 5.5 15 V18.5 H2 V15 Q2.5 10.5 6.5 9 V6 H3Z" fill="#5ab85a" stroke="#3d8f3d" stroke-width="0.8"/></svg>
<div style="position:absolute;left:1734px;top:579px;width:177px;height:31px;box-sizing:border-box;border:1px solid #c4c4c4;border-radius:3px;background:linear-gradient(#f6f6f6 0,#f0f0f0 16px,#dcdcdc 16px,#dddddd calc(100% - 7px),#ebebeb calc(100% - 6px),#ededed 100%);box-shadow:inset 0 1px 0 #fff;"></div>
<div class="t" style="left:1791.00px;top:589px;font-size:14px;color:#000; transform:scaleX(0.9419);transform-origin:0 0;">Historie svazku</div>
<svg style="position:absolute;left:1741px;top:586px" width="19" height="19"><circle cx="9.5" cy="9.5" r="8.7" fill="#5d8fd8" stroke="#4b7ac0" stroke-width="0.8"/><circle cx="9.5" cy="9.5" r="6.5" fill="#7aa6e6"/><rect x="8.3" y="8" width="2.4" height="6" fill="#fff"/><rect x="7.3" y="13" width="4.4" height="1.4" fill="#fff"/><circle cx="9.5" cy="5.4" r="1.4" fill="#fff"/></svg>
<div style="position:absolute;left:1734px;top:800px;width:177px;height:31px;box-sizing:border-box;border:1px solid #c4c4c4;border-radius:3px;background:linear-gradient(#f6f6f6 0,#f0f0f0 16px,#dcdcdc 16px,#dddddd calc(100% - 7px),#ebebeb calc(100% - 6px),#ededed 100%);box-shadow:inset 0 1px 0 #fff;"></div>
<div class="t" style="left:1773.30px;top:809px;font-size:14px;color:#000; transform:scaleX(0.9679);transform-origin:0 0;">Zobrazit hierarchicky</div>
<svg style="position:absolute;left:1740px;top:804px" width="23" height="22"><path d="M3.5 18.5 L12.5 9.5" stroke="#d8932a" stroke-width="5.2" stroke-linecap="round"/><path d="M3.5 18.5 L12.5 9.5" stroke="#f2cd38" stroke-width="3.2" stroke-linecap="round"/><path d="M6.2 13.2 L8.8 15.8 M8.8 10.8 L10.9 12.9" stroke="#d8932a" stroke-width="2.6"/><path d="M6.4 13.6 L8.4 15.6 M9 11.2 L10.6 12.8" stroke="#f2cd38" stroke-width="1.2"/><rect x="10.5" y="2.2" width="10" height="9.5" rx="2.5" transform="rotate(45 15.5 7)" fill="#f5d64a" stroke="#d8932a" stroke-width="1"/><ellipse cx="16.8" cy="5.6" rx="1.8" ry="1.2" transform="rotate(45 16.8 5.6)" fill="#fff6c0"/></svg>
<div style="position:absolute;left:1734px;top:836px;width:177px;height:30px;box-sizing:border-box;border:1px solid #c4c4c4;border-radius:3px;background:linear-gradient(#f6f6f6 0,#f0f0f0 16px,#dcdcdc 16px,#dddddd calc(100% - 7px),#ebebeb calc(100% - 6px),#ededed 100%);box-shadow:inset 0 1px 0 #fff;"></div>
<div class="t" style="left:1791.40px;top:844px;font-size:14px;color:#a8a8a8; transform:scaleX(0.9445);transform-origin:0 0;">Moje zobrazení</div>
<svg style="position:absolute;left:1741px;top:841px" width="19" height="19"><circle cx="9.5" cy="9.5" r="8.8" fill="#f3a9a9" stroke="#efb9b9" stroke-width="0.8"/><circle cx="9.5" cy="9.5" r="7" fill="none" stroke="#f8caca" stroke-width="0.8"/><rect x="5.5" y="8" width="8" height="3" fill="#fff"/></svg>
<div style="position:absolute;left:0px;top:875px;width:1920px;height:35px;background:#dfe8f6;"></div>
<svg style="position:absolute;left:6px;top:885px" width="15" height="15"><defs><radialGradient id="gi" cx="40%" cy="35%" r="65%"><stop offset="0" stop-color="#8f8fe0"/><stop offset="1" stop-color="#2a2a8a"/></radialGradient></defs><circle cx="7.5" cy="7.5" r="6.8" fill="url(#gi)"/><rect x="6.6" y="6" width="2" height="5.5" fill="#fff"/><circle cx="7.6" cy="4.2" r="1.1" fill="#fff"/></svg>
<div class="t" style="left:33.00px;top:886px;font-size:16px;color:#000; transform:scaleX(1.0045);transform-origin:0 0;">v3.17.0 - </div>
<div class="t" style="left:100.00px;top:886px;font-size:16px;font-weight:bold;color:#000; transform:scaleX(1.0184);transform-origin:0 0;">Testovací knihovna</div>
<div class="t" style="left:255.00px;top:886px;font-size:16px;color:#000; transform:scaleX(0.9789);transform-origin:0 0;">(Naposledy -)</div>
<div style="position:absolute;left:1685px;top:878px;width:232px;height:29px;box-sizing:border-box;border:1px solid #bdbdbd;border-radius:3px;background:linear-gradient(#f7f7f7 0,#f0f0f0 50%,#dcdcdc 51%,#e4e4e4 100%);"></div>
<div class="t" style="left:1774.00px;top:886px;font-size:14px;color:#000; transform:scaleX(0.9565);transform-origin:0 0;">Benda Petr</div>
<svg style="position:absolute;left:1902px;top:890px" width="7" height="4"><path d="M0 0 L7 0 L3.5 4Z" fill="#000"/></svg>
<svg style="position:absolute;left:1692px;top:884px" width="22" height="17"><path d="M1 1 H18 Q20.5 1 20.5 3.5 V7 Q20.5 9 18 9 H9 L7.5 15.5 L5 9 H3 Q1 9 1 7Z" fill="#7b9ed3"/><rect x="17.5" y="2.5" width="1.5" height="5" fill="#dde8f6"/></svg>
<div style="position:absolute;left:1917px;top:0px;width:3px;height:873px;background:rgba(0,0,0,0.21);"></div>
<div style="position:absolute;left:1917px;top:731px;width:1px;height:3px;background:#3a4a7a;"></div>
<div style="position:absolute;left:1917px;top:737px;width:1px;height:4px;background:#3a4a7a;"></div>
<div style="position:absolute;left:1731px;top:506px;width:189px;height:37px;box-sizing:border-box;border:3px solid #e8202a;"></div>
</body></html>
